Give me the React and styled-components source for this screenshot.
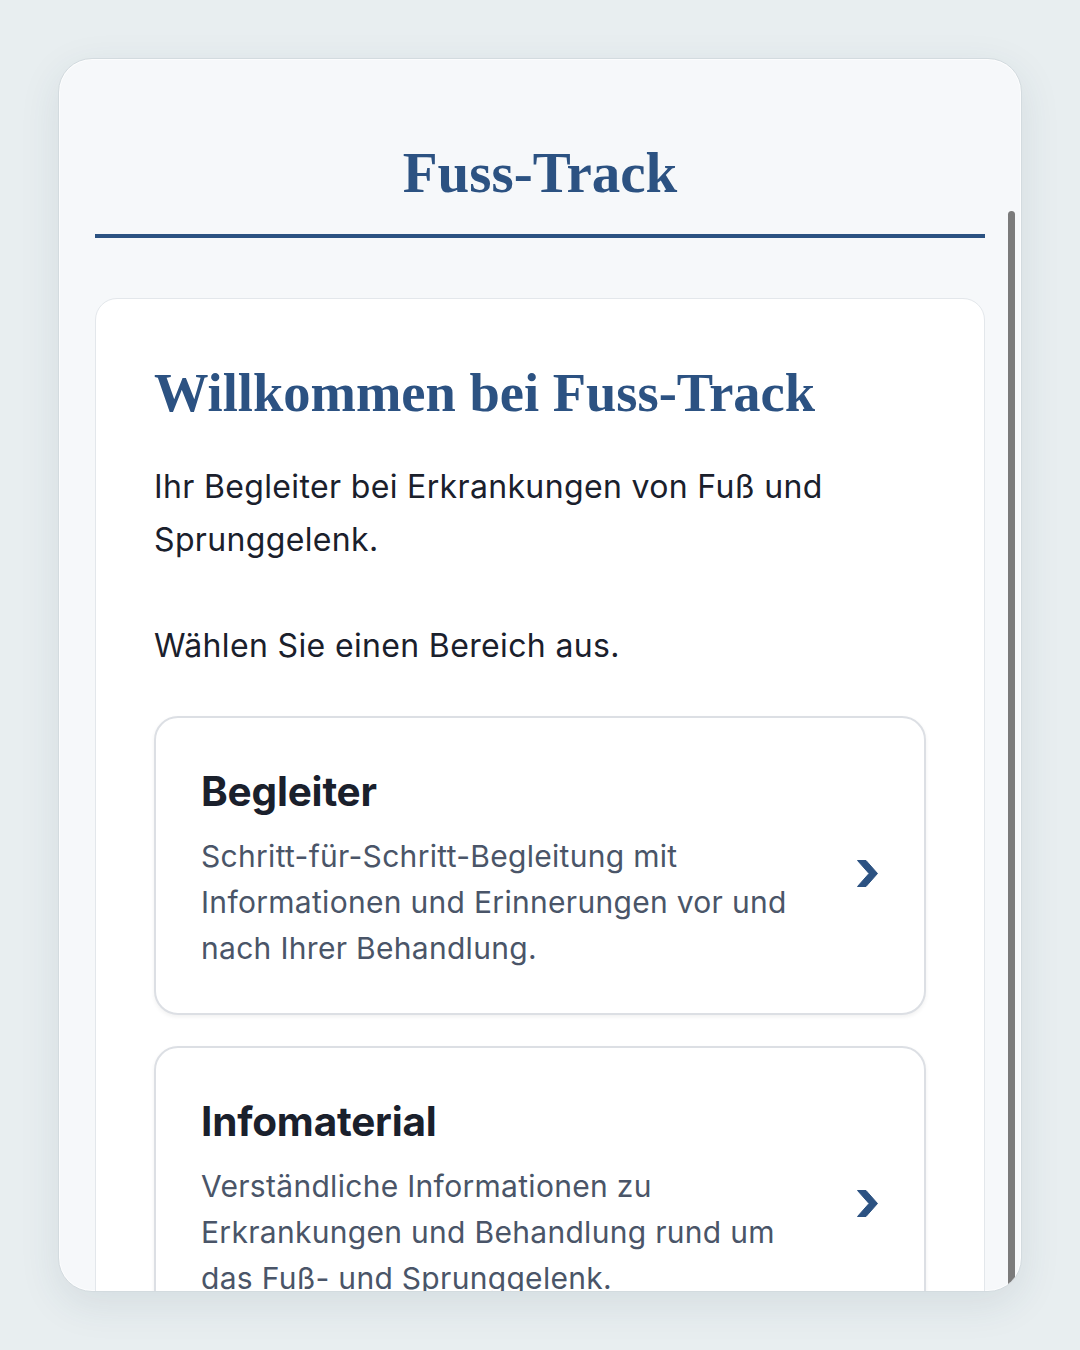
import React from "react";
import styled, { createGlobalStyle } from "styled-components";

const Global = createGlobalStyle`
  html, body { margin: 0; padding: 0; background: #e8eef0; }
  body { font-family: Inter, "Noto Sans", sans-serif; }
  * { box-sizing: border-box; }
`;

const Page = styled.div`
  width: 1080px;
  height: 1350px;
  padding: 58px;
  background: #e8eef0;
`;

const Frame = styled.div`
  position: relative;
  width: 964px;
  height: 1234px;
  background: #f6f8fa;
  border: 1px solid #d3dbdf;
  border-radius: 34px;
  box-shadow: 0 0 0 1px rgba(255,255,255,0.7) inset, 0 12px 40px rgba(40, 70, 90, 0.10);
  overflow: hidden;
`;

const Scroller = styled.div`
  height: 100%;
  overflow: hidden;
  padding: 0 36px;
`;

const Header = styled.header`
  padding: 80px 0 28px;
  border-bottom: 4px solid #2c5282;
  text-align: center;
`;

const AppTitle = styled.h1`
  margin: 0;
  font-family: "Liberation Serif", "DejaVu Serif", serif;
  font-weight: 700;
  font-size: 57px;
  line-height: 67px;
  color: #2c5282;
`;

const Main = styled.main`
  padding-top: 60px;
`;

const WelcomeCard = styled.section`
  background: #ffffff;
  border: 1px solid #e3e7eb;
  border-radius: 22px;
  padding: 62px 58px 60px;
`;

const WelcomeTitle = styled.h2`
  margin: 0 0 35px;
  font-family: "Liberation Serif", "DejaVu Serif", serif;
  font-weight: 700;
  font-size: 54.5px;
  line-height: 64px;
  color: #2c5282;
`;

const Lead = styled.p`
  margin: 0 0 44px;
  font-size: 32px;
  letter-spacing: 0.35px;
  line-height: 53px;
  color: #1a202c;
  padding-right: 40px;
`;

const List = styled.div`
  display: flex;
  flex-direction: column;
  gap: 31px;
`;

const NavCard = styled.a`
  display: flex;
  align-items: center;
  gap: 24px;
  padding: 50px 46px 42px 45px;
  background: #ffffff;
  border: 2px solid #dcdfe4;
  border-radius: 24px;
  box-shadow: 0 2px 4px rgba(0, 0, 0, 0.06);
  text-decoration: none;
  cursor: pointer;
`;

const NavText = styled.div`
  flex: 1;
  min-width: 0;
`;

const NavTitle = styled.h3`
  margin: 0 0 17px;
  font-size: 40.5px;
  line-height: 48px;
  font-weight: 700;
  color: #1a202c;
  letter-spacing: -0.2px;
`;

const NavDesc = styled.p`
  margin: 0;
  font-size: 30px;
  letter-spacing: 0.3px;
  line-height: 46px;
  color: #4a5568;
  padding-right: 30px;
`;

const Chevron = styled.svg`
  flex: none;
  width: 21px;
  height: 27px;
  margin-top: 8px;
  color: #2c5282;
`;

const ScrollThumb = styled.div`
  position: absolute;
  right: 6px;
  top: 152px;
  bottom: 0;
  width: 7px;
  border-radius: 4px;
  background: #7b7b7b;
`;

const items = [
  {
    title: "Begleiter",
    desc: "Schritt-für-Schritt-Begleitung mit Informationen und Erinnerungen vor und nach Ihrer Behandlung.",
  },
  {
    title: "Infomaterial",
    desc: "Verständliche Informationen zu Erkrankungen und Behandlung rund um das Fuß- und Sprunggelenk.",
  },
];

export default function App() {
  return (
    <Page>
      <Global />
      <Frame>
        <Scroller>
          <Header>
            <AppTitle>Fuss-Track</AppTitle>
          </Header>
          <Main>
            <WelcomeCard>
              <WelcomeTitle>Willkommen bei Fuss-Track</WelcomeTitle>
              <Lead>
                Ihr Begleiter bei Erkrankungen von Fuß und Sprunggelenk.
                <br />
                <br />
                Wählen Sie einen Bereich aus.
              </Lead>
              <List>
                {items.map((it) => (
                  <NavCard key={it.title}>
                    <NavText>
                      <NavTitle>{it.title}</NavTitle>
                      <NavDesc>{it.desc}</NavDesc>
                    </NavText>
                    <Chevron viewBox="0 0 21 27" aria-hidden="true">
                      <path
                        d="M0.5 0.5 H9 L20.5 13.5 L9 26.5 H0.5 L12 13.5 Z"
                        fill="currentColor"
                        stroke="currentColor"
                        strokeWidth="1"
                        strokeLinejoin="round"
                      />
                    </Chevron>
                  </NavCard>
                ))}
              </List>
            </WelcomeCard>
          </Main>
        </Scroller>
        <ScrollThumb />
      </Frame>
    </Page>
  );
}
